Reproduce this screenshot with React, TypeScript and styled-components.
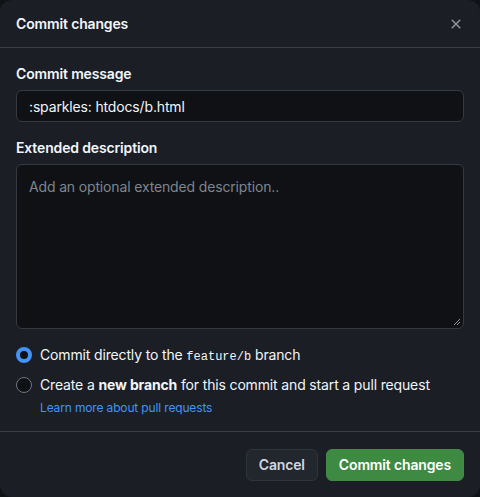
import React from "react";
import styled, { createGlobalStyle } from "styled-components";

const Global = createGlobalStyle`
  html, body { margin: 0; padding: 0; background: #101216; }
  body { font-family: Inter, "Liberation Sans", sans-serif; -webkit-font-smoothing: antialiased; letter-spacing: -0.15px; }
  * { box-sizing: border-box; }
`;

const Dialog = styled.div`
  width: 480px;
  height: 497px;
  background: #1b1e24;
  border-radius: 12px;
  display: flex;
  flex-direction: column;
  color: #e6edf3;
  overflow: hidden;
`;

const Header = styled.div`
  height: 48px;
  display: flex;
  align-items: center;
  justify-content: space-between;
  padding: 0 16px;
  border-bottom: 1px solid #3a3f47;
  flex-shrink: 0;
`;

const Title = styled.h1`
  margin: 0;
  font-size: 14px;
  font-weight: 600;
  color: #f0f6fc;
`;

const CloseButton = styled.button`
  background: none;
  border: none;
  padding: 0;
  width: 16px;
  height: 16px;
  display: flex;
  align-items: center;
  justify-content: center;
  color: #8b949e;
  cursor: pointer;
`;

const Body = styled.div`
  flex: 1;
  display: flex;
  flex-direction: column;
  padding: 16px 16px 0 16px;
`;

const Label = styled.label<{ $top?: number }>`
  font-size: 14px;
  font-weight: 600;
  color: #f0f6fc;
  line-height: 20px;
  margin-bottom: 6px;
  margin-top: ${(p) => p.$top ?? 0}px;
`;

const Input = styled.div`
  height: 32px;
  border: 1px solid #353a42;
  border-radius: 6px;
  background: #0f1115;
  display: flex;
  align-items: center;
  padding: 0 12px;
  font-size: 14px;
  color: #f0f6fc;
`;

const TextArea = styled.div`
  position: relative;
  height: 165px;
  border: 1px solid #353a42;
  border-radius: 6px;
  background: #0f1115;
  padding: 12px 12px;
  font-size: 14px;
  line-height: 20px;
  color: #7d8590;
`;

const Grip = styled.svg`
  position: absolute;
  right: 2px;
  bottom: 2px;
`;

const Options = styled.div`
  display: flex;
  flex-direction: column;
  margin-top: 16px;
  gap: 8px;
`;

const OptionRow = styled.div`
  display: flex;
  align-items: flex-start;
  gap: 8px;
`;

const Radio = styled.span<{ $checked?: boolean }>`
  width: 16px;
  height: 16px;
  border-radius: 50%;
  flex-shrink: 0;
  margin-top: 2px;
  background: #0f1115;
  border: ${(p) => (p.$checked ? "4px solid #4493f8" : "1px solid #6e7681")};
`;

const OptionText = styled.div`
  display: flex;
  flex-direction: column;
  font-size: 14px;
  line-height: 20px;
  color: #f0f6fc;
`;

const Strong = styled.b`
  font-weight: 700;
`;

const Code = styled.code`
  font-family: "Liberation Mono", "DejaVu Sans Mono", monospace;
  font-size: 12px;
  letter-spacing: 0;
`;

const Link = styled.a`
  font-size: 12px;
  line-height: 18px;
  color: #4493f8;
  text-decoration: none;
  margin-top: 4px;
`;

const Footer = styled.div`
  height: 66px;
  border-top: 1px solid #3a3f47;
  display: flex;
  align-items: center;
  justify-content: flex-end;
  gap: 8px;
  padding: 0 16px;
  flex-shrink: 0;
`;

const Button = styled.button<{ $primary?: boolean }>`
  height: 32px;
  padding: 0 12px;
  border-radius: 6px;
  font-family: inherit;
  letter-spacing: inherit;
  font-size: 14px;
  font-weight: 600;
  border: 1px solid ${(p) => (p.$primary ? "#428a45" : "#30343b")};
  background: ${(p) => (p.$primary ? "#3f8a43" : "#22262d")};
  color: ${(p) => (p.$primary ? "#ffffff" : "#d1d7e0")};
  cursor: pointer;
`;

export default function App() {
  return (
    <>
      <Global />
      <Dialog>
        <Header>
          <Title>Commit changes</Title>
          <CloseButton aria-label="Close">
            <svg width="16" height="16" viewBox="0 0 16 16" fill="currentColor">
              <path d="M3.72 3.72a.75.75 0 0 1 1.06 0L8 6.94l3.22-3.22a.749.749 0 0 1 1.275.326.749.749 0 0 1-.215.734L9.06 8l3.22 3.22a.749.749 0 0 1-.326 1.275.749.749 0 0 1-.734-.215L8 9.06l-3.22 3.22a.751.751 0 0 1-1.042-.018.751.751 0 0 1-.018-1.042L6.94 8 3.72 4.78a.75.75 0 0 1 0-1.06Z" />
            </svg>
          </CloseButton>
        </Header>
        <Body>
          <Label>Commit message</Label>
          <Input>:sparkles: htdocs/b.html</Input>
          <Label $top={16}>Extended description</Label>
          <TextArea>
            Add an optional extended description..
            <Grip width="8" height="8" viewBox="0 0 8 8">
              <path d="M7 1 L1 7 M7 4 L4 7" stroke="#9198a1" strokeWidth="1" />
            </Grip>
          </TextArea>
          <Options>
            <OptionRow>
              <Radio $checked />
              <OptionText>
                <span>
                  Commit directly to the <Code>feature/b</Code> branch
                </span>
              </OptionText>
            </OptionRow>
            <OptionRow>
              <Radio />
              <OptionText>
                <span>
                  Create a <Strong>new branch</Strong> for this commit and start a pull request
                </span>
                <Link href="#">Learn more about pull requests</Link>
              </OptionText>
            </OptionRow>
          </Options>
        </Body>
        <Footer>
          <Button>Cancel</Button>
          <Button $primary>Commit changes</Button>
        </Footer>
      </Dialog>
    </>
  );
}
